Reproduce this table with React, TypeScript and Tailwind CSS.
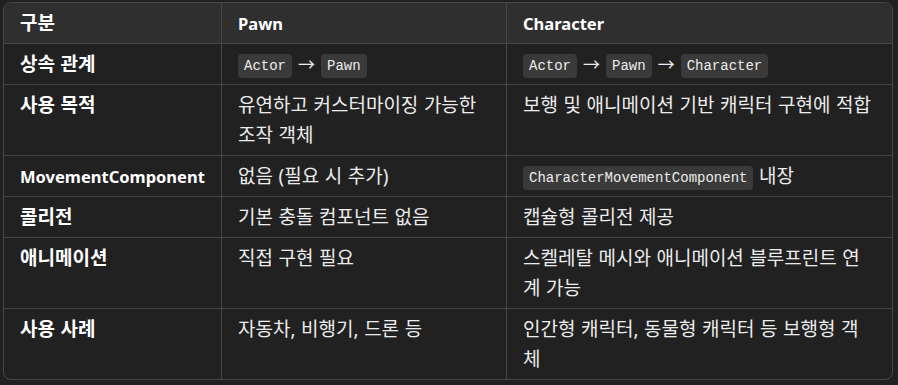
import React from "react";

const Code = ({ children }: { children: React.ReactNode }) => (
  <code className="inline-block rounded-[4px] bg-[#3a3a3a] px-[6px] py-[2px] align-[1px] font-['Liberation_Mono','DejaVu_Sans_Mono',monospace] text-[14px] leading-[20px] [word-spacing:0] text-[#ececec]">
    {children}
  </code>
);

const L = ({ children }: { children: React.ReactNode }) => (
  <span className="text-[16.5px] leading-none">{children}</span>
);

const Arrow = () => <span className="mx-[6px] text-[17px] leading-none">→</span>;

type Row = { k: React.ReactNode; a: React.ReactNode; b: React.ReactNode };

const rows: Row[] = [
  {
    k: "상속 관계",
    a: (
      <>
        <Code>Actor</Code>
        <Arrow />
        <Code>Pawn</Code>
      </>
    ),
    b: (
      <>
        <Code>Actor</Code>
        <Arrow />
        <Code>Pawn</Code>
        <Arrow />
        <Code>Character</Code>
      </>
    ),
  },
  {
    k: "사용 목적",
    a: "유연하고 커스터마이징 가능한 조작 객체",
    b: "보행 및 애니메이션 기반 캐릭터 구현에 적합",
  },
  {
    k: <L>MovementComponent</L>,
    a: "없음 (필요 시 추가)",
    b: (
      <>
        <Code>CharacterMovementComponent</Code> 내장
      </>
    ),
  },
  { k: "콜리전", a: "기본 충돌 컴포넌트 없음", b: "캡슐형 콜리전 제공" },
  {
    k: "애니메이션",
    a: "직접 구현 필요",
    b: "스켈레탈 메시와 애니메이션 블루프린트 연계 가능",
  },
  {
    k: "사용 사례",
    a: "자동차, 비행기, 드론 등",
    b: "인간형 캐릭터, 동물형 캐릭터 등 보행형 객체",
  },
];

const cell = "pl-4 pr-4 py-[5px] leading-[30px]";

export default function App() {
  return (
    <div className="min-h-[385px] w-[898px] bg-[#212121] pl-[3px] pt-[2px] font-['Noto_Sans','Noto_Sans_CJK_KR',sans-serif] text-[19px] text-[#ececec] [word-spacing:0.6px]">
      <div className="w-[890px] overflow-hidden rounded-[8px] border border-[#464646]">
        <div className="grid grid-cols-[218px_285px_385px] border-b border-[#464646] bg-[#2f2f2f] font-bold text-white">
          <div className={`${cell} border-r border-[#464646]`}>구분</div>
          <div className={`${cell} border-r border-[#464646]`}>
            <L>Pawn</L>
          </div>
          <div className={cell}>
            <L>Character</L>
          </div>
        </div>
        {rows.map((r, i) => (
          <div
            key={i}
            className={`grid grid-cols-[218px_285px_385px] ${i < rows.length - 1 ? "border-b border-[#464646]" : ""}`}
          >
            <div className={`${cell} border-r border-[#464646] font-bold text-white`}>{r.k}</div>
            <div className={`${cell} border-r border-[#464646]`}>{r.a}</div>
            <div className="py-[5px] pl-4 pr-[17px] leading-[30px]">{r.b}</div>
          </div>
        ))}
      </div>
    </div>
  );
}
